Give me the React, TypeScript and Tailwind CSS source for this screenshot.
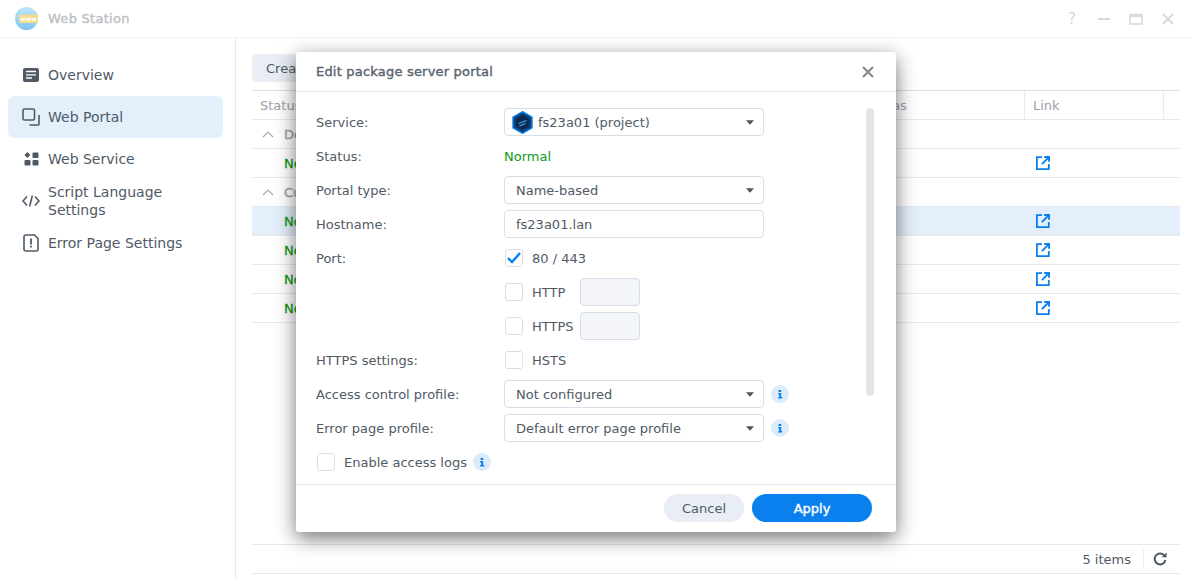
import React from "react";

const Caret = () => (
  <svg width="10" height="5" viewBox="0 0 10 5" className="shrink-0"><path d="M1 0.2h8L5 4.8z" fill="#4a5561" /></svg>
);

const Select = ({ children }: { children: React.ReactNode }) => (
  <div className="w-[260px] h-7 shrink-0 rounded-[4px] border border-[#d5dfe9] bg-white flex items-center pl-[11px] pr-2 justify-between">
    <div className="flex items-center min-w-0">{children}</div>
    <Caret />
  </div>
);

const Info = () => (
  <svg width="18" height="18" viewBox="0 0 18 18" className="shrink-0">
    <circle cx="9" cy="9" r="9" fill="#dcebfa" />
    <path d="M7.6 5h2.6v2H7.6zM7.2 8h3v4h1v1.4H7.2V12h1V9.4h-1z" fill="#0a80ee" />
  </svg>
);

const Check = ({ on }: { on?: boolean }) => (
  <div className="w-[18px] h-[18px] shrink-0 rounded-[3px] border border-[#d5dfe9] bg-white flex items-center justify-center">
    {on && (
      <svg width="14" height="12" viewBox="0 0 14 12"><path d="M1 6l4 4 8-9" fill="none" stroke="#0a80ee" strokeWidth="2.4" /></svg>
    )}
  </div>
);

const FormRow = ({ label, children }: { label?: string; children: React.ReactNode }) => (
  <div className="flex items-center h-7">
    <div className="w-[188px] shrink-0">{label}</div>
    {children}
  </div>
);

const CheckItem = ({ on, label, w }: { on?: boolean; label: string; w?: string }) => (
  <div className="flex items-center pl-[1px]">
    <Check on={on} />
    <span className={`ml-[9px] ${w ?? ""}`}>{label}</span>
  </div>
);

const LinkIcon = () => (
  <svg width="14" height="14" viewBox="0 0 14 14">
    <path d="M6 1.2H0.9v11.9h11.9V8" fill="none" stroke="#0a80ee" strokeWidth="1.8" />
    <path d="M8.2 0h5.8v5.8h-1.9V3.3L6.6 8.8 5.2 7.4l5.5-5.5H8.2z" fill="#0a80ee" />
  </svg>
);

const NavItem = ({ icon, active, children }: { icon: React.ReactNode; active?: boolean; children: React.ReactNode }) => (
  <div className={`h-[42px] flex items-center pl-[14px] pr-2 rounded-[6px] text-[14px] ${active ? "bg-[#e3effb]" : ""}`}>
    <div className="w-[18px] h-[18px] mr-2 flex items-center justify-center shrink-0">{icon}</div>
    <div className="leading-[18px]">{children}</div>
  </div>
);

const Row = ({ active, link, label, group }: { active?: boolean; link?: boolean; label: string; group?: boolean }) => (
  <div className={`h-[29px] border-b border-[#e5ebf1] flex items-center ${active ? "bg-[#e3effb]" : ""}`}>
    {group ? (
      <div className="flex items-center pl-[10px] text-[#9aa2ab] [-webkit-text-stroke:0.4px_#9aa2ab]">
        <svg width="12" height="7" viewBox="0 0 12 7" className="mr-[10px]"><path d="M1 6l5-5 5 5" fill="none" stroke="#a4abb3" strokeWidth="1.2" /></svg>
        <span>{label}</span>
      </div>
    ) : (
      <>
        <div className="pl-[32px] text-[#0f9a1c] [-webkit-text-stroke:0.3px_#0f9a1c]">{label}</div>
        <div className="flex-1" />
        {link && <div className="w-[144px] flex items-center"><LinkIcon /></div>}
      </>
    )}
  </div>
);

export default function App() {
  return (
    <div className="relative w-[1191px] h-[580px] overflow-hidden bg-white text-[13px] leading-[21px] text-[#4f5a66] font-['DejaVu_Sans',sans-serif]">
      <header className="h-[38px] border-b border-[#f0f2f5] flex items-center pl-[15px] pr-[17px] leading-5">
        <svg width="23" height="23" viewBox="0 0 23 23" className="mr-[10px]">
          <defs>
            <linearGradient id="g1" x1="0" y1="0" x2="0" y2="1">
              <stop offset="0" stopColor="#bfe6fb" />
              <stop offset="1" stopColor="#7cc6f0" />
            </linearGradient>
          </defs>
          <circle cx="11.5" cy="11.5" r="11.5" fill="url(#g1)" />
          <rect x="4" y="7.5" width="19" height="8.5" fill="#f6dc8e" />
          <text x="13.5" y="14" textAnchor="middle" fontSize="6" fontWeight="700" fill="#fff" fontFamily="DejaVu Sans">www</text>
        </svg>
        <span className="text-[#bcc1c6] tracking-[0.27px] [-webkit-text-stroke:0.4px_#bcc1c6]">Web Station</span>
        <div className="flex-1" />
        <div className="flex items-center text-[#d6d9dd]">
          <span className="text-[16px] w-[14px] text-center">?</span>
          <svg width="14" height="14" viewBox="0 0 14 14" className="ml-[18px]"><path d="M1 7h12" stroke="#d6d9dd" strokeWidth="2" /></svg>
          <svg width="14" height="12" viewBox="0 0 14 12" className="ml-[18px]"><path d="M1 1.5h12v9.5H1z" fill="none" stroke="#d6d9dd" strokeWidth="1.6" /><path d="M1 2.5h12" stroke="#d6d9dd" strokeWidth="3" /></svg>
          <svg width="12" height="12" viewBox="0 0 12 12" className="ml-[19px]"><path d="M1 1l10 10M11 1L1 11" stroke="#d6d9dd" strokeWidth="2" /></svg>
        </div>
      </header>
      <div className="flex h-[542px]">
        <aside className="w-[236px] shrink-0 border-r border-[#e5ebf1] pt-4 pl-2 pr-3">
          <NavItem icon={
            <svg width="16" height="14" viewBox="0 0 16 14"><rect width="16" height="14" rx="2" fill="#4f5a66" /><path d="M3 3.5h10M3 6.8h10M3 10h6" stroke="#fff" strokeWidth="1.3" /></svg>
          }>Overview</NavItem>
          <NavItem active icon={
            <svg width="18" height="18" viewBox="0 0 18 18"><rect x="1" y="1" width="11.5" height="11" rx="1.5" fill="none" stroke="#4f5a66" strokeWidth="1.6" /><path d="M17 7v9a1 1 0 0 1-1 1H7.5" fill="none" stroke="#4f5a66" strokeWidth="1.6" /></svg>
          }>Web Portal</NavItem>
          <NavItem icon={
            <svg width="15" height="14" viewBox="0 0 15 14"><path d="M3.4 0l3 3-3 3-3-3z" fill="#4f5a66" /><rect x="8.5" y="0.5" width="6" height="5.5" rx="1" fill="#4f5a66" /><rect x="0.5" y="8" width="6" height="5.5" rx="1" fill="#4f5a66" /><rect x="8.5" y="8" width="6" height="5.5" rx="1" fill="#4f5a66" /></svg>
          }>Web Service</NavItem>
          <NavItem icon={
            <svg width="18" height="12" viewBox="0 0 18 12"><path d="M5 1.5L1 6l4 4.5M13 1.5L17 6l-4 4.5M10.4 0.5L7.6 11.5" fill="none" stroke="#4f5a66" strokeWidth="1.6" /></svg>
          }>Script Language<br />Settings</NavItem>
          <NavItem icon={
            <svg width="16" height="18" viewBox="0 0 16 18"><path d="M3 1h8.5L15 4.5V15a2 2 0 0 1-2 2H3a2 2 0 0 1-2-2V3a2 2 0 0 1 2-2z" fill="none" stroke="#4f5a66" strokeWidth="1.6" /><path d="M7.1 4.5h1.8v6H7.1zM7.1 11.8h1.8v1.8H7.1z" fill="#4f5a66" /></svg>
          }>Error Page Settings</NavItem>
        </aside>
        <main className="flex-1 flex flex-col pt-4 pl-4 pr-[11px] min-w-0">
          <div className="h-7 mb-2 flex">
            <div className="w-[120px] rounded-[4px] bg-[#e9eef4] flex items-center pl-[14px]">Create</div>
          </div>
          <div className="border-t border-[#d5dfe9] h-[30px] flex items-stretch text-[#9aa2ab]">
            <div className="w-[616px] pl-2 flex items-center border-b border-[#e5ebf1]">Status</div>
            <div className="w-[156px] pl-2 flex items-center border-b border-[#e5ebf1]">Alias</div>
            <div className="border-l border-b border-[#e5ebf1] flex-1 flex items-center pl-2 w-[139px]">Link</div>
            <div className="border-l border-b border-[#e5ebf1] w-[17px]" />
          </div>
          <Row group label="Default" />
          <Row label="Normal" link />
          <Row group label="Custom" />
          <Row label="Normal" link active />
          <Row label="Normal" link />
          <Row label="Normal" link />
          <Row label="Normal" link />
          <div className="flex-1" />
          <div className="h-[30px] border-y border-[#e5ebf1] flex items-center justify-end mb-[6px]">
            <span>5 items</span>
            <div className="w-px h-5 bg-[#eef1f4] ml-3 mr-[9px]" />
            <svg width="14" height="14" viewBox="0 0 14 14" className="mr-[13px]"><path d="M11.6 4A5.4 5.4 0 1 0 12.4 8" fill="none" stroke="#4f5a66" strokeWidth="2" /><path d="M8.6 5.2L13.6 5.2 13.6 0.4z" fill="#4f5a66" /></svg>
          </div>
        </main>
      </div>

      <div className="absolute left-[296px] top-[52px] w-[600px] h-[480px] bg-white rounded-[3px] shadow-[0_6px_20px_rgba(0,0,0,0.55)] flex flex-col">
        <div className="h-10 border-b border-[#e5ebf1] flex items-center justify-between pl-5 pr-[22px] shrink-0 leading-5">
          <span className="text-[#5b6570] tracking-[0.2px] [-webkit-text-stroke:0.4px_#5b6570]">Edit package server portal</span>
          <svg width="12" height="12" viewBox="0 0 12 12"><path d="M1 1l10 10M11 1L1 11" stroke="#7d868f" strokeWidth="2" /></svg>
        </div>
        <div className="flex-1 flex pl-5 pr-[22px] pt-4 min-h-0">
          <div className="flex-1 flex flex-col gap-[6px]">
            <FormRow label="Service:">
              <Select>
                <svg width="21" height="23" viewBox="0 0 21 23" className="-ml-[4px] mr-[5px] shrink-0">
                  <path d="M10.5 0.7L20 6.1v10.8l-9.5 5.4L1 16.9V6.1z" fill="#0b3f7c" stroke="#0a80ee" strokeWidth="1.4" />
                  <path d="M10.5 4L17 7.8v7.4L10.5 19 4 15.2V7.8z" fill="#0d2a4e" />
                  <path d="M6.5 12.5l8-3M7.5 15l6-2.5" stroke="#3fa9f5" strokeWidth="1.2" />
                </svg>
                <span>fs23a01 (project)</span>
              </Select>
            </FormRow>
            <FormRow label="Status:"><span className="text-[#0f9a1c]">Normal</span></FormRow>
            <FormRow label="Portal type:"><Select>Name-based</Select></FormRow>
            <FormRow label="Hostname:">
              <div className="w-[260px] h-7 rounded-[4px] border border-[#d5dfe9] flex items-center pl-[11px]">fs23a01.lan</div>
            </FormRow>
            <FormRow label="Port:"><CheckItem on label="80 / 443" /></FormRow>
            <FormRow>
              <CheckItem label="HTTP" w="w-[48px]" />
              <div className="w-[60px] h-7 rounded-[4px] border border-[#d5dfe9] bg-[#f3f5f8]" />
            </FormRow>
            <FormRow>
              <CheckItem label="HTTPS" w="w-[48px]" />
              <div className="w-[60px] h-7 rounded-[4px] border border-[#d5dfe9] bg-[#f3f5f8]" />
            </FormRow>
            <FormRow label="HTTPS settings:"><CheckItem label="HSTS" /></FormRow>
            <FormRow label="Access control profile:">
              <Select>Not configured</Select>
              <div className="ml-[7px]"><Info /></div>
            </FormRow>
            <FormRow label="Error page profile:">
              <Select>Default error page profile</Select>
              <div className="ml-[7px]"><Info /></div>
            </FormRow>
            <div className="h-7 flex items-center pl-[1px]">
              <Check />
              <span className="ml-[9px]">Enable access logs</span>
              <div className="ml-[6px]"><Info /></div>
            </div>
          </div>
          <div className="w-2 h-[288px] rounded-full bg-[#e4e4e4] shrink-0" />
        </div>
        <div className="h-12 border-t border-[#e5ebf1] flex items-center justify-end pr-6 pb-px gap-2 shrink-0">
          <div className="w-20 h-7 rounded-full bg-[#e9eef4] flex items-center justify-center">Cancel</div>
          <div className="w-[120px] h-7 rounded-full bg-[#0a80ee] flex items-center justify-center text-white [-webkit-text-stroke:0.4px_#ffffff]">Apply</div>
        </div>
      </div>
    </div>
  );
}
